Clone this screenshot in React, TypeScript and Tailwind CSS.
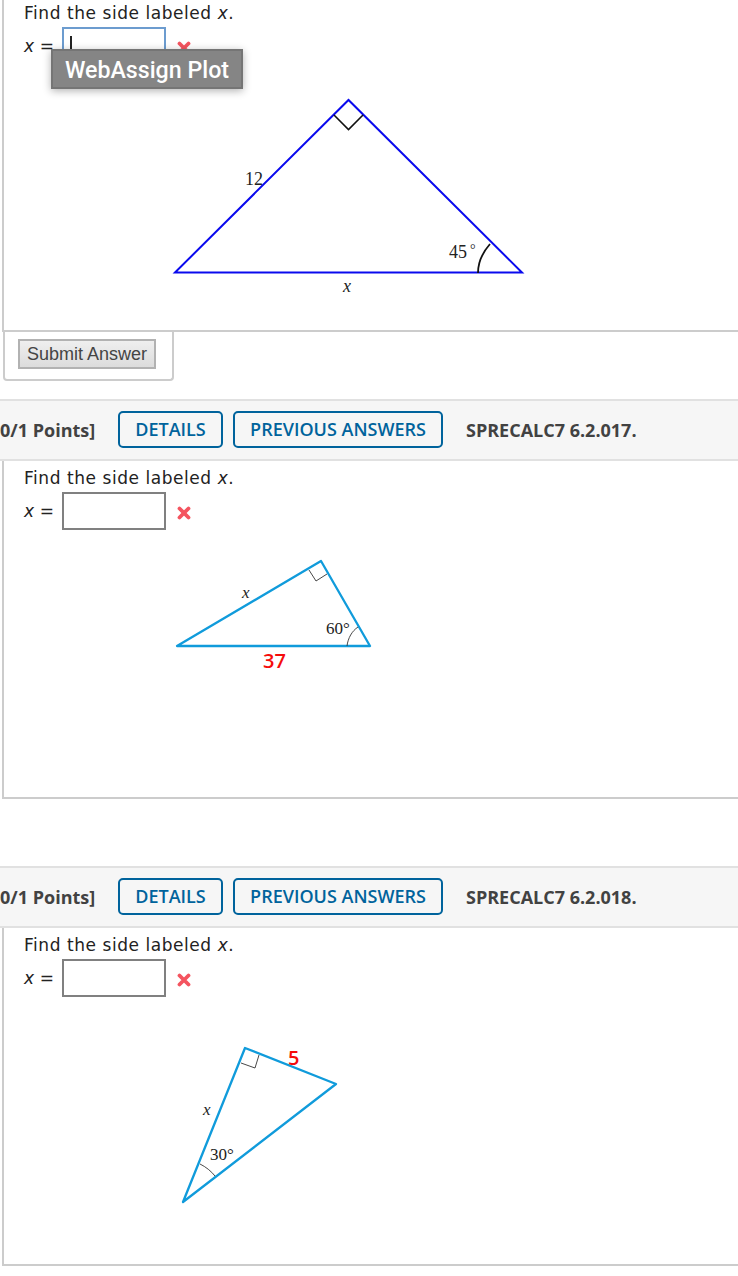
import React from "react";

const serif = "font-['Liberation_Serif',serif]";

function Cross() {
  return (
    <svg width="14" height="14" viewBox="0 0 14 14" className="ml-[11px] mt-[3px] shrink-0">
      <path d="M2.5 2.5 L11.5 11.5 M11.5 2.5 L2.5 11.5" stroke="#f4545f" strokeWidth="3.8" strokeLinecap="round" />
    </svg>
  );
}

function Prompt({ active = false }: { active?: boolean }) {
  return (
    <div className="pl-[20px] font-['DejaVu_Sans',sans-serif] text-[17px] text-[#222]">
      <div className="h-[26px] leading-[27px] tracking-[0.55px]">
        Find the side labeled <i>x</i>.
      </div>
      <div className="mt-[1px] flex h-[38px] items-center">
        <div className="w-[38px] tracking-[0.2px] leading-[26px]">
          <i>x</i> =
        </div>
        <div
          className={
            active
              ? "relative h-[38px] w-[104px] border-2 border-[#6c9ccf] bg-white"
              : "h-[38px] w-[104px] border-2 border-[#808080] bg-white"
          }
        >
          {active ? <div className="absolute left-[6px] top-[7px] h-[16px] w-[2px] bg-[#222]" /> : null}
        </div>
        <Cross />
      </div>
    </div>
  );
}

function Header({ code }: { code: string }) {
  return (
    <div className="flex h-[62px] items-center border-y-2 border-[#e1e1e1] bg-[#f6f6f6] font-['Open_Sans',sans-serif] text-[18px] text-[#424242]">
      <span className="w-[118px] font-bold">0/1 Points]</span>
      <span className="mb-[1px] flex h-[37px] w-[105px] items-center justify-center rounded-[5px] border-2 border-[#00639c] font-semibold text-[#00639c]">
        DETAILS
      </span>
      <span className="mb-[1px] ml-[10px] flex h-[37px] w-[210px] items-center justify-center rounded-[5px] border-2 border-[#00639c] font-semibold text-[#00639c]">
        PREVIOUS ANSWERS
      </span>
      <span className="ml-[23px] font-bold">{code}</span>
    </div>
  );
}

export default function App() {
  return (
    <div className="relative h-[1276px] w-[738px] overflow-hidden bg-white">
      <div className="ml-[2px] h-[332px] border-b-2 border-l-2 border-[#cccccc]">
        <Prompt active />
        <svg width="380" height="210" viewBox="160 90 380 210" className="ml-[156px] mt-[26px] block">
          <path d="M175 271.5 L348.5 99 L522 271.5 Z" fill="none" stroke="#0a0aee" strokeWidth="2" />
          <path d="M334 114 L348.5 128.5 L363 114" fill="none" stroke="#111" strokeWidth="1.6" />
          <path d="M478 272 C478 260 483 251 490 243" fill="none" stroke="#111" strokeWidth="1.8" />
          <g className={serif} fill="#222" fontSize="18">
            <text x="245" y="184">12</text>
            <text x="449" y="257">45</text>
            <text x="470" y="253" fontSize="14">°</text>
            <text x="343" y="291" fontStyle="italic">x</text>
          </g>
        </svg>
      </div>
      <div className="ml-[3px] -mt-[2px] h-[51px] w-[171px] rounded-b-[4px] border-x-2 border-b-2 border-[#cccccc] pl-[13px] pt-[9px]">
        <div className="flex h-[30px] w-[138px] items-center justify-center border-2 border-[#b2b2b2] bg-gradient-to-b from-[#efefef] to-[#dcdcdc] font-['Liberation_Sans',sans-serif] text-[18px] text-[#444]">
          Submit Answer
        </div>
      </div>

      <div className="mt-[18px]">
        <Header code="SPRECALC7 6.2.017." />
      </div>
      <div className="ml-[2px] h-[338px] border-b-2 border-l-2 border-[#cccccc] pt-[4px]">
        <Prompt />
        <svg width="220" height="130" viewBox="165 550 220 130" className="ml-[161px] mt-[20px] block">
          <path d="M177 646 L321 561 L370 646 Z" fill="none" stroke="#109bdb" strokeWidth="2.3" strokeLinejoin="round" />
          <path d="M309 570 L316 581 L327 574" fill="none" stroke="#333" strokeWidth="0.9" />
          <path d="M347 646 C348 638 352 631 358 627" fill="none" stroke="#333" strokeWidth="0.9" />
          <g className={serif} fill="#222" fontSize="17">
            <text x="242" y="598" fontStyle="italic">x</text>
            <text x="326" y="634">60°</text>
          </g>
          <text x="263" y="668" fill="#f50c0c" fontSize="20" fontWeight="600" className="font-['Open_Sans',sans-serif]">37</text>
        </svg>
      </div>

      <div className="mt-[67px]">
        <Header code="SPRECALC7 6.2.018." />
      </div>
      <div className="ml-[2px] h-[338px] border-b-2 border-l-2 border-[#cccccc] pt-[4px]">
        <Prompt />
        <svg width="180" height="180" viewBox="170 1035 180 180" className="ml-[166px] mt-[38px] block">
          <path d="M183 1202 L245 1048 L336 1084 Z" fill="none" stroke="#109bdb" strokeWidth="2.3" strokeLinejoin="round" />
          <path d="M241 1063 L255 1068 L259 1055" fill="none" stroke="#333" strokeWidth="0.9" />
          <path d="M200 1164 C206 1167 211 1171 215 1176" fill="none" stroke="#333" strokeWidth="0.9" />
          <g className={serif} fill="#222" fontSize="17">
            <text x="203" y="1115" fontStyle="italic">x</text>
            <text x="210" y="1160">30°</text>
          </g>
          <text x="288" y="1065" fill="#f50c0c" fontSize="20" fontWeight="600" className="font-['Open_Sans',sans-serif]">5</text>
        </svg>
      </div>

      <div className="absolute left-[51px] top-[49px] flex h-[40px] w-[192px] items-center justify-center border-2 border-[#757575] bg-[#858585] pt-[2px] text-[23.2px] text-white shadow-[0_2px_8px_rgba(0,0,0,0.3)]">
        <span className="font-['Roboto',sans-serif] font-medium">WebAssign Plot</span>
      </div>
    </div>
  );
}
